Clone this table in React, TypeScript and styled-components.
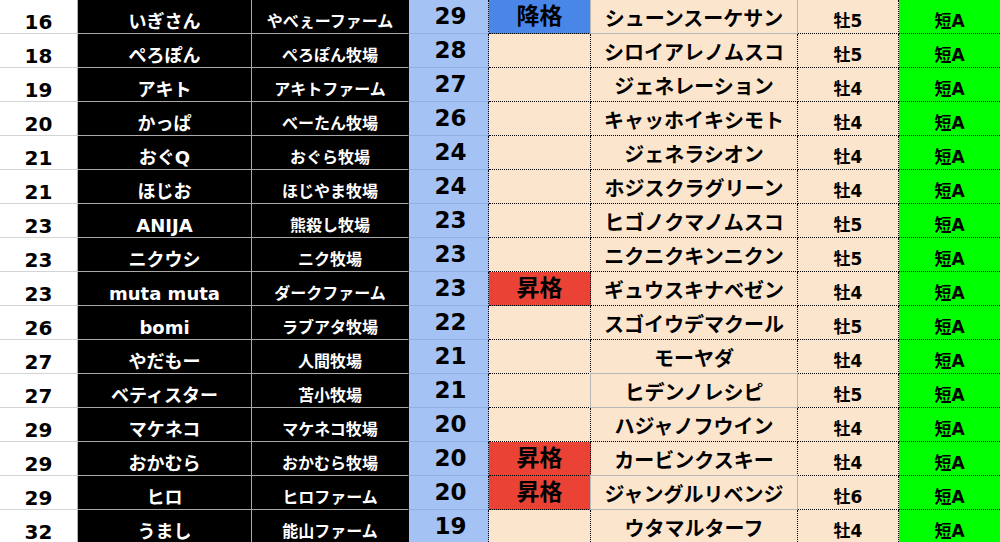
import React from 'react'
import styled, { createGlobalStyle, css } from 'styled-components'

type Tone = 'up' | 'down' | undefined

interface Entry {
  rank: number
  owner: string
  farm: string
  points: number
  status?: Tone
  horse: string
  sex: string
  dist: string
  plain?: boolean
}

const entries: Entry[] = [
  { rank: 16, owner: 'いぎさん', farm: 'やべぇーファーム', points: 29, status: 'down', horse: 'シューンスーケサン', sex: '牡5', dist: '短A', plain: true },
  { rank: 18, owner: 'ぺろぽん', farm: 'ぺろぽん牧場', points: 28, horse: 'シロイアレノムスコ', sex: '牡5', dist: '短A' },
  { rank: 19, owner: 'アキト', farm: 'アキトファーム', points: 27, horse: 'ジェネレーション', sex: '牡4', dist: '短A' },
  { rank: 20, owner: 'かっぱ', farm: 'べーたん牧場', points: 26, horse: 'キャッホイキシモト', sex: '牡4', dist: '短A' },
  { rank: 21, owner: 'おぐQ', farm: 'おぐら牧場', points: 24, horse: 'ジェネラシオン', sex: '牡4', dist: '短A' },
  { rank: 21, owner: 'ほじお', farm: 'ほじやま牧場', points: 24, horse: 'ホジスクラグリーン', sex: '牡4', dist: '短A' },
  { rank: 23, owner: 'ANIJA', farm: '熊殺し牧場', points: 23, horse: 'ヒゴノクマノムスコ', sex: '牡5', dist: '短A' },
  { rank: 23, owner: 'ニクウシ', farm: 'ニク牧場', points: 23, horse: 'ニクニクキンニクン', sex: '牡5', dist: '短A' },
  { rank: 23, owner: 'muta muta', farm: 'ダークファーム', points: 23, status: 'up', horse: 'ギュウスキナベゼン', sex: '牡4', dist: '短A' },
  { rank: 26, owner: 'bomi', farm: 'ラブアタ牧場', points: 22, horse: 'スゴイウデマクール', sex: '牡5', dist: '短A' },
  { rank: 27, owner: 'やだもー', farm: '人間牧場', points: 21, horse: 'モーヤダ', sex: '牡4', dist: '短A' },
  { rank: 27, owner: 'ベティスター', farm: '苫小牧場', points: 21, horse: 'ヒデンノレシピ', sex: '牡5', dist: '短A', plain: true },
  { rank: 29, owner: 'マケネコ', farm: 'マケネコ牧場', points: 20, horse: 'ハジャノフウイン', sex: '牡4', dist: '短A' },
  { rank: 29, owner: 'おかむら', farm: 'おかむら牧場', points: 20, status: 'up', horse: 'カービンクスキー', sex: '牡4', dist: '短A' },
  { rank: 29, owner: 'ヒロ', farm: 'ヒロファーム', points: 20, status: 'up', horse: 'ジャングルリベンジ', sex: '牡6', dist: '短A', plain: true },
  { rank: 32, owner: 'うまし', farm: '能山ファーム', points: 19, horse: 'ウタマルターフ', sex: '牡4', dist: '短A' },
]

const GlobalStyle = createGlobalStyle`
  html, body {
    margin: 0;
    padding: 0;
    background: #ffffff;
    overflow: hidden;
  }
  body {
    font-family: "DejaVu Sans", "Noto Sans CJK JP", sans-serif;
  }
`

const Sheet = styled.div`
  display: grid;
  grid-template-columns: 78px 174px 157px 80px 102px 207px 101px 101px;
  grid-auto-rows: 34px;
  width: 1000px;
`

const Cell = styled.div`
  box-sizing: border-box;
  display: flex;
  align-items: center;
  justify-content: center;
  padding-top: 4px;
  font-weight: 700;
  line-height: 1;
  white-space: nowrap;
  color: #000;
  border-right: 1px solid transparent;
  border-bottom: 1px solid transparent;
`

const RankCell = styled(Cell)`
  font-size: 20px;
  padding-top: 10px;
  background: #ffffff;
  border-bottom-color: #d4d4d4;
  border-right-color: #b4b4b4;
`

const OwnerCell = styled(Cell)`
  font-size: 18px;
  padding-top: 10px;
  color: #ffffff;
  background: #000000;
  border-bottom-color: #a9a9a9;
  border-right-color: #a9a9a9;
`

const FarmCell = styled(OwnerCell)`
  font-size: 16px;
  padding-top: 10px;
  border-right-color: #000000;
`

const PointCell = styled(Cell)`
  font-size: 23px;
  padding-top: 0;
  background: #a4c2f4;
  border-bottom-color: #8fb0e6;
  border-right: 1px dotted #000000;
  padding-left: 4px;
`

const toneBg = {
  up: '#ea4335',
  down: '#4a86e8',
}

const StatusCell = styled(Cell)<{ $tone?: Tone }>`
  font-size: 23px;
  padding-top: 0;
  background: ${(p) => (p.$tone ? toneBg[p.$tone] : '#fce5cd')};
  border-bottom: 1px dotted #000000;
  border-right: 1px dotted #000000;
`

const HorseCell = styled(Cell)<{ $plain?: boolean }>`
  position: relative;
  font-size: 20px;
  padding-top: 4px;
  background: #fce5cd;
  border-bottom: 1px dotted #000000;
  border-right: 1px dotted #000000;
  ${(p) =>
    p.$plain &&
    css`
      border-bottom-color: #b7b7b7;
      border-bottom-style: solid;
      border-right-color: #b7b7b7;
      border-right-style: solid;
      &::before {
        content: '';
        position: absolute;
        top: -1px;
        left: -1px;
        right: -1px;
        height: 0;
        border-top: 1px solid #b7b7b7;
      }
      &::after {
        content: '';
        position: absolute;
        top: -1px;
        bottom: -1px;
        left: -1px;
        width: 0;
        border-left: 1px solid #b7b7b7;
      }
    `}
`

const SexCell = styled(Cell)`
  font-size: 17px;
  padding-top: 10px;
  background: #fce5cd;
  border-bottom: 1px dotted #000000;
  border-right: 1px dotted #000000;
`

const DistCell = styled(SexCell)`
  background: #00ff00;
  border-right: none;
`

const statusLabel = (tone: Tone) => (tone === 'up' ? '昇格' : tone === 'down' ? '降格' : '')

export default function App() {
  return (
    <>
      <GlobalStyle />
      <Sheet>
        {entries.map((e, i) => (
          <React.Fragment key={i}>
            <RankCell>{e.rank}</RankCell>
            <OwnerCell>{e.owner}</OwnerCell>
            <FarmCell>{e.farm}</FarmCell>
            <PointCell>{e.points}</PointCell>
            <StatusCell $tone={e.status}>{statusLabel(e.status)}</StatusCell>
            <HorseCell $plain={e.plain}>{e.horse}</HorseCell>
            <SexCell>{e.sex}</SexCell>
            <DistCell>{e.dist}</DistCell>
          </React.Fragment>
        ))}
      </Sheet>
    </>
  )
}
